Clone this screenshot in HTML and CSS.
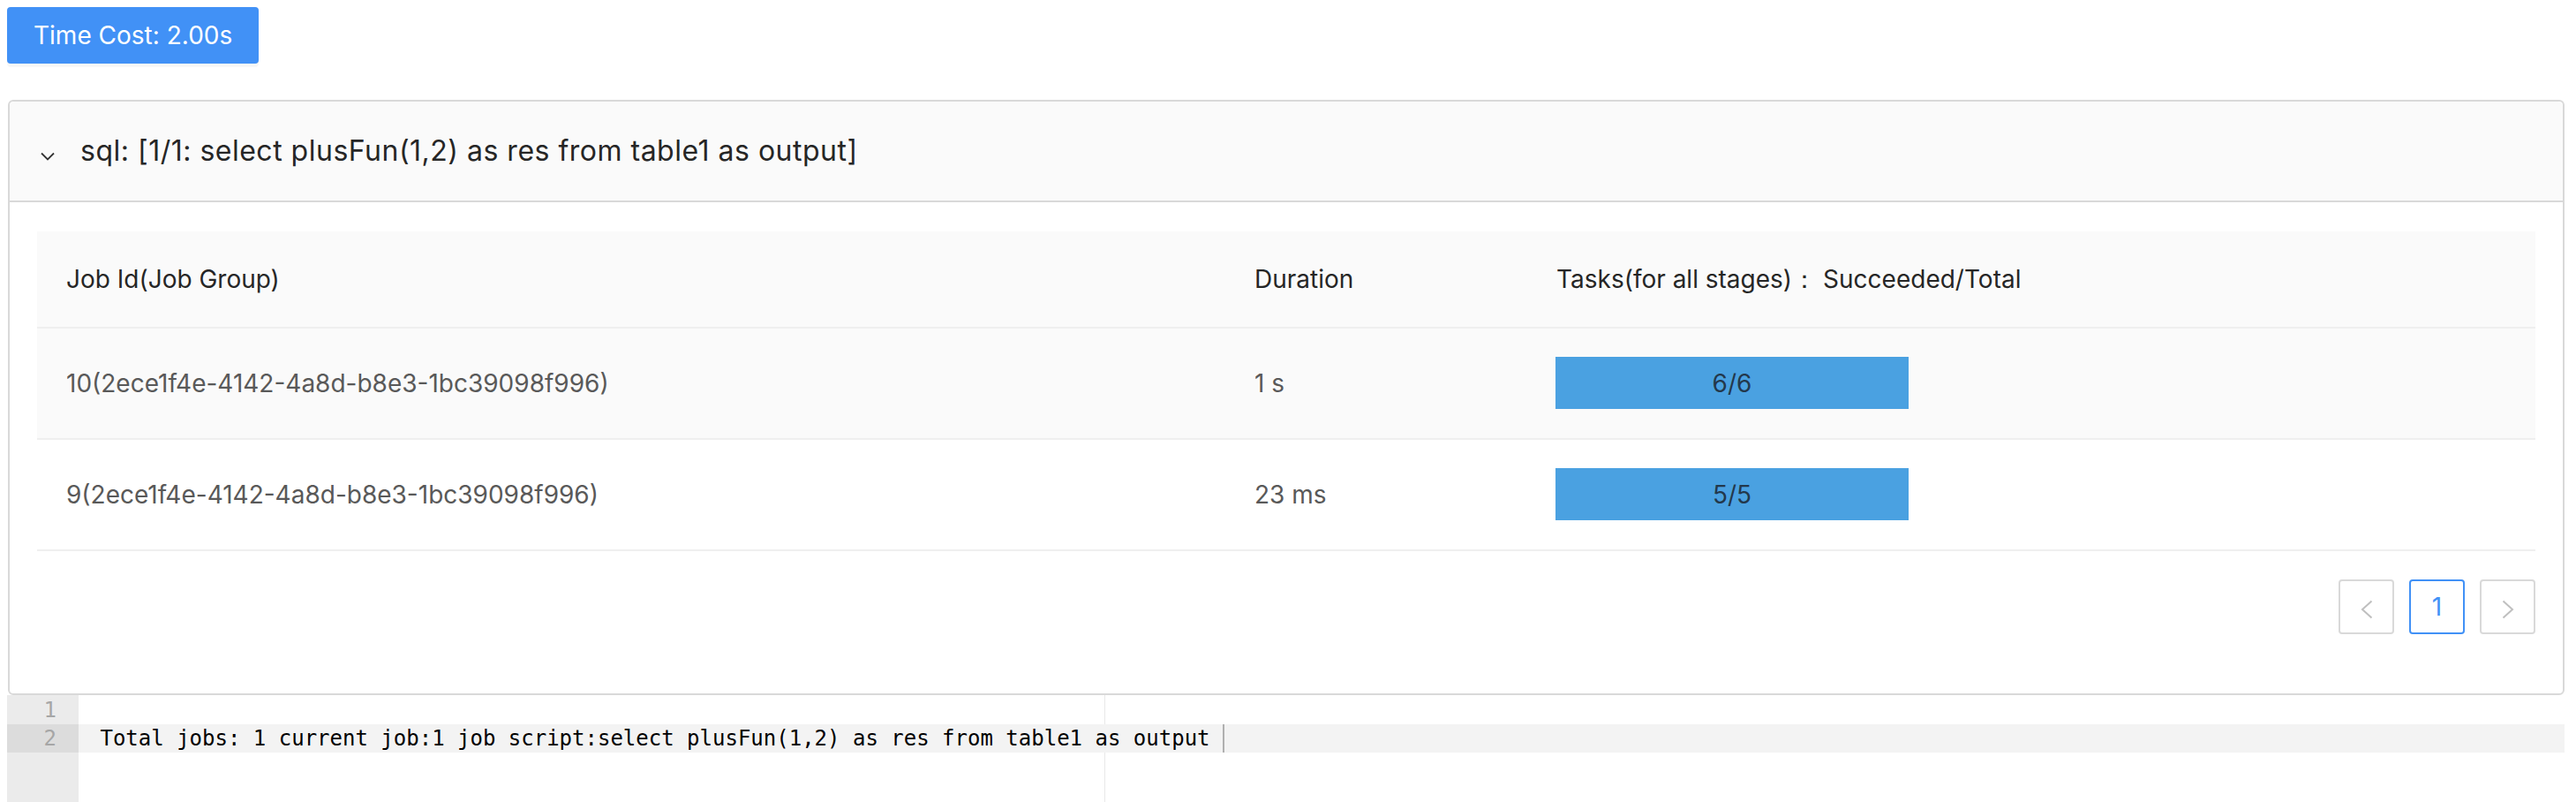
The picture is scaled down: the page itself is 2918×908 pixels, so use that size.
FILE: index.html
```html
<!DOCTYPE html>
<html>
<head>
<meta charset="utf-8">
<title>Job Progress</title>
<link rel="stylesheet" href="styles.css">
</head>
<body>
<button class="time-btn">Time Cost: 2.00s</button>

<div class="panel">
  <div class="panel-header">
    <svg class="chev" width="16" height="10" viewBox="0 0 16 10"><path d="M1 1.5 L8 8.5 L15 1.5" fill="none" stroke="#333" stroke-width="1.8"/></svg>
    <span class="panel-title">sql: [1/1: select plusFun(1,2) as res from table1 as output]</span>
  </div>
  <div class="panel-body">
    <table class="jobs">
      <colgroup><col class="c-job"><col class="c-dur"><col class="c-task"></colgroup>
      <thead>
        <tr><th>Job Id(Job Group)</th><th>Duration</th><th>Tasks(for all stages)：<span class="sep">Succeeded/Total</span></th></tr>
      </thead>
      <tbody>
        <tr class="striped"><td>10(2ece1f4e-4142-4a8d-b8e3-1bc39098f996)</td><td>1 s</td><td><div class="bar"><div class="bar-fill" style="width:100%"></div><span class="bar-label">6/6</span></div></td></tr>
        <tr><td>9(2ece1f4e-4142-4a8d-b8e3-1bc39098f996)</td><td>23 ms</td><td><div class="bar"><div class="bar-fill" style="width:100%"></div><span class="bar-label">5/5</span></div></td></tr>
      </tbody>
    </table>
    <div class="pager">
      <div class="pg disabled"><svg width="14" height="22" viewBox="0 0 14 22"><path d="M12.5 1.5 L2 11 L12.5 20.5" fill="none" stroke="#bfbfbf" stroke-width="2"/></svg></div>
      <div class="pg active">1</div>
      <div class="pg disabled"><svg width="14" height="22" viewBox="0 0 14 22"><path d="M1.5 1.5 L12 11 L1.5 20.5" fill="none" stroke="#bfbfbf" stroke-width="2"/></svg></div>
    </div>
  </div>
</div>

<div class="editor">
  <div class="gutter">
    <div class="gl">1</div>
    <div class="gl gl-active">2</div>
  </div>
  <div class="code">
    <div class="print-margin"></div>
    <div class="line"></div>
    <div class="line line-active"> Total jobs: 1 current job:1 job script:select plusFun(1,2) as res from table1 as output <span class="cursor"></span></div>
  </div>
</div>
</body>
</html>
```

FILE: styles.css
```css
body {
  margin: 8px;
  font-family: Inter, "Noto Sans", sans-serif;
  background: #fff;
  color: rgba(0,0,0,0.85);
}

.time-btn {
  display: block;
  height: 64px;
  padding: 0 30px;
  border: none;
  border-radius: 4px;
  background: #4191f6;
  color: #fff;
  font-family: Inter, "Noto Sans", sans-serif;
  font-size: 28px;
  box-shadow: 0 4px 0 rgba(0,0,0,0.03);
}

.panel {
  margin: 41px 5px 0 1px;
  border: 2px solid #d9d9d9;
  border-radius: 6px;
  background: #fff;
}

.panel-header {
  display: flex;
  align-items: center;
  height: 114px;
  box-sizing: border-box;
  padding: 0 0 0 35px;
  background: #fafafa;
  border-bottom: 2px solid #d9d9d9;
  border-radius: 6px 6px 0 0;
}

.chev {
  margin-top: 12px;
  margin-right: 29px;
  flex: none;
}

.panel-title {
  font-size: 32px;
  letter-spacing: 0.5px;
  line-height: 44px;
  color: #262626;
}

.panel-body {
  padding: 33px 31px 35px 31px;
}

.jobs {
  width: 100%;
  border-collapse: collapse;
  table-layout: fixed;
  font-size: 28px;
}

.c-job { width: 1346px; }
.c-dur { width: 342px; }

.jobs th {
  text-align: left;
  font-weight: 400;
  color: #262626;
  background: #fafafa;
  padding: 32px 33px;
  line-height: 44px;
  border-bottom: 2px solid #efefef;
  white-space: nowrap;
}

.jobs th .sep { margin-left: 7px; }

.jobs td {
  padding: 32px 33px 33px;
  line-height: 44px;
  color: #595959;
  border-bottom: 2px solid #efefef;
  white-space: nowrap;
}

.jobs tr.striped td { background: #fafafa; }

.jobs td:last-child { padding-left: 32px; }

.bar {
  position: relative;
  width: 400px;
  height: 59px;
  background: #e6e6e6;
  display: flex;
  align-items: center;
  justify-content: center;
}

.bar-fill {
  position: absolute;
  left: 0;
  top: 0;
  bottom: 0;
  background: #4aa1e1;
}

.bar-label {
  position: relative;
  color: #23384c;
  font-size: 28px;
}

.pager {
  display: flex;
  justify-content: flex-end;
  gap: 17px;
  margin-top: 32px;
  margin-bottom: 32px;
}

.pg {
  width: 63px;
  height: 62px;
  box-sizing: border-box;
  border: 2px solid #d9d9d9;
  border-radius: 4px;
  display: flex;
  align-items: center;
  justify-content: center;
  font-size: 28px;
  color: #595959;
}

.pg.active {
  border-color: #4191f6;
  color: #4191f6;
}

.pg svg { margin-top: 6px; }

.editor {
  display: flex;
  margin: 0 5px 0 -8px;
  height: 124px;
  font-family: "DejaVu Sans Mono", "Liberation Mono", monospace;
  font-size: 24px;
  background: #fff;
}

.gutter {
  width: 89px;
  flex: none;
  background: #ebebeb;
  padding-top: 1px;
}

.gl {
  height: 32px;
  line-height: 32px;
  text-align: right;
  padding-right: 25px;
  color: #a6a6a6;
}

.gl-active { background: #dcdcdc; }

.code {
  position: relative;
  flex: 1;
  padding-top: 1px;
}

.print-margin {
  position: absolute;
  left: 1162px;
  top: 0;
  bottom: 0;
  width: 1px;
  background: #e8e8e8;
}

.line {
  position: relative;
  height: 32px;
  line-height: 32px;
  padding-left: 10px;
  white-space: pre;
  color: #000;
}

.line-active { background: #f3f3f3; }

.cursor {
  display: inline-block;
  width: 2px;
  height: 32px;
  vertical-align: top;
  background: #b0b0b0;
}
```
